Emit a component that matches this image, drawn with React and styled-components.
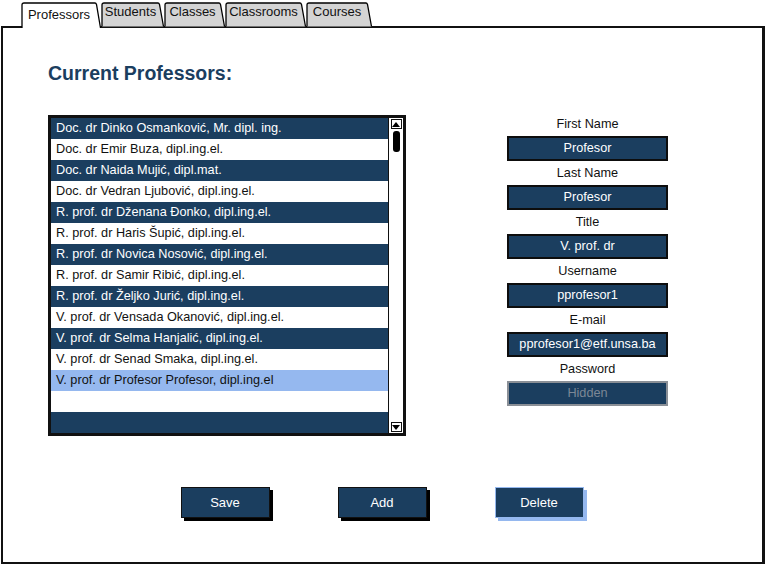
import React from 'react'
import styled, { createGlobalStyle } from 'styled-components'

const GlobalStyle = createGlobalStyle`
  * { box-sizing: border-box; }
  body {
    margin: 0;
    background: #fff;
    font-family: "Liberation Sans", Arial, sans-serif;
  }
`

const NAVY = '#1b3e5f'
const PICK = '#95b8ef'

const tabs = [
  { label: 'Professors', width: 80, active: true },
  { label: 'Students', width: 63 },
  { label: 'Classes', width: 61 },
  { label: 'Classrooms', width: 81 },
  { label: 'Courses', width: 66 },
]

const professors = [
  'Doc. dr Dinko Osmanković, Mr. dipl. ing.',
  'Doc. dr Emir Buza, dipl.ing.el.',
  'Doc. dr Naida Mujić, dipl.mat.',
  'Doc. dr Vedran Ljubović, dipl.ing.el.',
  'R. prof. dr Dženana Đonko, dipl.ing.el.',
  'R. prof. dr Haris Šupić, dipl.ing.el.',
  'R. prof. dr Novica Nosović, dipl.ing.el.',
  'R. prof. dr Samir Ribić, dipl.ing.el.',
  'R. prof. dr Željko Jurić, dipl.ing.el.',
  'V. prof. dr Vensada Okanović, dipl.ing.el.',
  'V. prof. dr Selma Hanjalić, dipl.ing.el.',
  'V. prof. dr Senad Smaka, dipl.ing.el.',
  'V. prof. dr Profesor Profesor, dipl.ing.el',
  '',
  '',
]

const fields = [
  { label: 'First Name', value: 'Profesor' },
  { label: 'Last Name', value: 'Profesor' },
  { label: 'Title', value: 'V. prof. dr' },
  { label: 'Username', value: 'pprofesor1' },
  { label: 'E-mail', value: 'pprofesor1@etf.unsa.ba' },
  { label: 'Password', value: 'Hidden', disabled: true },
]

const Tab = ({ label, width, active }) => (
  <TabItem style={{ width }}>
    <TabShape width={width} height={25} viewBox={`0 0 ${width} 25`}>
      <path
        d={`M1 ${active ? 26 : 24.5} L1 3 Q1 1 3 1 L${width - 6} 1 Q${width - 5} 1 ${width - 4.5} 2.5 L${width - 0.5} ${active ? 26 : 24.5}`}
        fill={active ? '#fff' : '#d4d4d4'}
        stroke="#000"
        strokeWidth="1.3"
      />
    </TabShape>
    <TabLabel $active={active}>{label}</TabLabel>
  </TabItem>
)

const App = () => {
  return (
    <Page>
      <GlobalStyle />
      <TabBar>
        {tabs.map((t) => (
          <Tab key={t.label} {...t} />
        ))}
      </TabBar>
      <Panel>
        <Title>Current Professors:</Title>
        <Content>
          <ListBox>
            <Rows>
              {professors.map((p, i) => (
                <Row key={i} $tone={i === 12 ? 'pick' : i % 2 === 0 ? 'dark' : 'light'}>
                  {p}
                </Row>
              ))}
            </Rows>
            <ScrollBar>
              <Arrow>
                <svg width="8" height="5" viewBox="0 0 8 5">
                  <path d="M0 5 L4 0 L8 5 Z" fill="#000" />
                </svg>
              </Arrow>
              <Thumb />
              <Track />
              <Arrow>
                <svg width="8" height="5" viewBox="0 0 8 5">
                  <path d="M0 0 L4 5 L8 0 Z" fill="#000" />
                </svg>
              </Arrow>
            </ScrollBar>
          </ListBox>
          <Form>
            {fields.map((f) => (
              <Field key={f.label}>
                <FieldLabel>{f.label}</FieldLabel>
                <Input $disabled={f.disabled}>{f.value}</Input>
              </Field>
            ))}
          </Form>
        </Content>
        <Buttons>
          <Button>Save</Button>
          <Button>Add</Button>
          <Button $focus>Delete</Button>
        </Buttons>
      </Panel>
    </Page>
  )
}

const Page = styled.div`
width: 767px;
height: 566px;
padding: 2px 0 0 1px;
`
const TabBar = styled.div`
display: flex;
align-items: flex-end;
height: 25px;
margin-left: 20px;
margin-bottom: -1px;
position: relative;
z-index: 1;
`
const TabItem = styled.div`
position: relative;
height: 25px;
display: flex;
align-items: flex-start;
justify-content: center;
padding-right: 4px;
`
const TabShape = styled.svg`
position: absolute;
left: 0;
top: 0;
overflow: visible;
`
const TabLabel = styled.span`
position: relative;
font-size: 13px;
color: #111;
margin-top: ${(p) => (p.$active ? '5px' : '2px')};
`
const Panel = styled.div`
width: 764px;
height: 538px;
border: 2px solid #111;
border-right-width: 3px;
padding-top: 33px;
display: flex;
flex-direction: column;
`
const Title = styled.h1`
margin: 0 0 0 45px;
font-size: 19.5px;
line-height: 24px;
font-weight: bold;
color: ${NAVY};
`
const Content = styled.div`
display: flex;
align-items: flex-start;
margin: 30px 0 0 45px;
`
const ListBox = styled.div`
width: 358px;
height: 321px;
border: 3px solid #111;
display: flex;
background: #fff;
`
const Rows = styled.div`
flex: 1;
display: flex;
flex-direction: column;
`
const Row = styled.div`
height: 21px;
line-height: 21px;
padding-left: 5px;
font-size: 12.7px;
white-space: nowrap;
overflow: hidden;
color: ${(p) => (p.$tone === 'dark' ? '#fff' : '#111')};
background: ${(p) =>
  p.$tone === 'dark' ? NAVY : p.$tone === 'pick' ? PICK : '#fff'};
`
const ScrollBar = styled.div`
width: 15px;
border-left: 1px solid #111;
background: #fff;
display: flex;
flex-direction: column;
align-items: center;
padding: 1px 0;
`
const Arrow = styled.div`
width: 11px;
height: 10px;
border: 1px solid #111;
display: flex;
align-items: center;
justify-content: center;
`
const Thumb = styled.div`
width: 7px;
height: 21px;
margin-top: 2px;
border-radius: 3px;
background: #000;
`
const Track = styled.div`
flex: 1;
`
const Form = styled.div`
width: 161px;
margin: -3px 0 0 101px;
display: flex;
flex-direction: column;
`
const Field = styled.div`
display: flex;
flex-direction: column;
align-items: center;
`
const FieldLabel = styled.div`
height: 24px;
line-height: 24px;
font-size: 12.7px;
color: #111;
`
const Input = styled.div`
width: 161px;
height: 25px;
line-height: 21px;
text-align: center;
font-size: 12.7px;
background: ${NAVY};
color: ${(p) => (p.$disabled ? '#7b8796' : '#fff')};
border: 2px solid ${(p) => (p.$disabled ? '#8a8f96' : '#0d0d0d')};
`
const Buttons = styled.div`
display: flex;
justify-content: center;
gap: 68px;
margin-top: 51px;
padding-right: 1px;
`
const Button = styled.div`
width: 89px;
height: 31px;
line-height: 29px;
text-align: center;
font-size: 13px;
color: #fff;
background: ${NAVY};
border: 1px solid ${(p) => (p.$focus ? PICK : '#111')};
box-shadow: 3px 3px 0 ${(p) => (p.$focus ? PICK : '#000')};
`

export default App
